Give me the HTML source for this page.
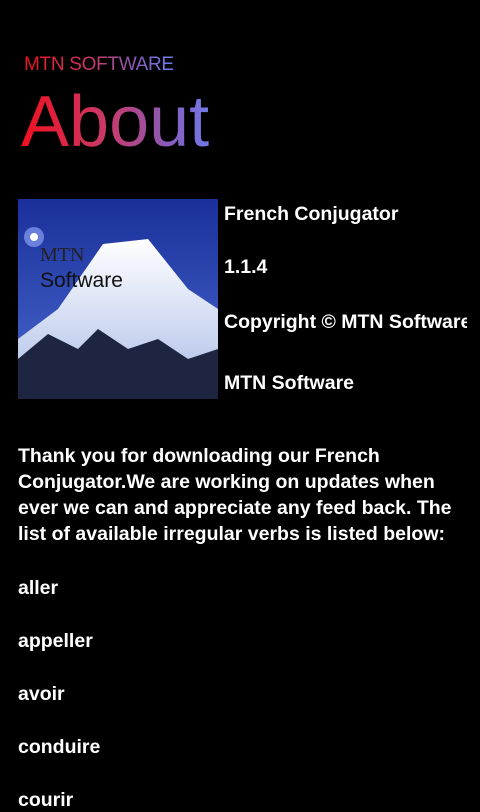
<!DOCTYPE html>
<html><head><meta charset="utf-8"><style>
body{margin:0;width:480px;height:800px;overflow:hidden;background:#000;font-family:"Liberation Sans",sans-serif;color:#fff;position:relative}
.g{background:linear-gradient(90deg,#f0101e 0%,#c83a6a 45%,#8a5ab8 75%,#6f7ef0 100%);-webkit-background-clip:text;background-clip:text;color:transparent;position:absolute;white-space:nowrap}
.t{position:absolute;font-weight:bold;font-size:19.5px;white-space:nowrap}
</style></head><body>
<div class="g" style="left:24px;top:54px;font-size:19px;width:149px;letter-spacing:-0.3px">MTN SOFTWARE</div>
<div class="g" style="left:21px;top:80px;font-size:72px;width:194px;line-height:84px;letter-spacing:0px">About</div>
<svg style="position:absolute;left:18px;top:199px" width="200" height="200" viewBox="0 0 200 200">
<defs><linearGradient id="sky" x1="0" y1="0" x2="0" y2="1"><stop offset="0" stop-color="#1a2f9a"/><stop offset="1" stop-color="#4a6bd0"/></linearGradient>
<linearGradient id="snow" x1="0" y1="0" x2="0" y2="1"><stop offset="0" stop-color="#fff"/><stop offset="1" stop-color="#a9bbe6"/></linearGradient></defs>
<rect width="200" height="200" fill="url(#sky)"/>
<circle cx="16" cy="38" r="10" fill="#9ab0ff" opacity=".6"/><circle cx="16" cy="38" r="4" fill="#fff"/>
<path d="M0 140 L40 110 L85 45 L130 40 L170 90 L200 110 L200 200 L0 200Z" fill="url(#snow)"/>
<path d="M0 160 L30 135 L60 150 L80 130 L110 150 L140 140 L170 160 L200 150 L200 200 L0 200Z" fill="#1e2540"/>
<text x="22" y="62" font-family="Liberation Serif,serif" font-size="20" fill="#222">MTN</text>
<text x="22" y="88" font-family="Liberation Sans,sans-serif" font-size="21" fill="#111">Software</text>
</svg>
<div style="position:absolute;left:224px;top:199px;width:243px;height:200px;overflow:hidden">
<div class="t" style="left:0;top:4px">French Conjugator</div>
<div class="t" style="left:0;top:57px">1.1.4</div>
<div class="t" style="left:0;top:112px">Copyright © MTN Software</div>
<div class="t" style="left:0;top:173px">MTN Software</div>
</div>
<div class="t" style="left:18px;top:443px;line-height:26px">Thank you for downloading our French<br>Conjugator.We are working on updates when<br>ever we can and appreciate any feed back. The<br>list of available irregular verbs is listed below:</div>
<div class="t" style="left:18px;top:577px">aller</div>
<div class="t" style="left:18px;top:630px">appeller</div>
<div class="t" style="left:18px;top:683px">avoir</div>
<div class="t" style="left:18px;top:736px">conduire</div>
<div class="t" style="left:18px;top:789px">courir</div>
</body></html>
